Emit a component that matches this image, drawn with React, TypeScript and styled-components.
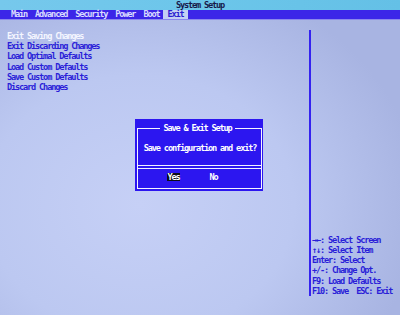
import styled, { createGlobalStyle } from "styled-components";

const GlobalStyle = createGlobalStyle`
  html, body {
    margin: 0;
    padding: 0;
    background: #bac6f0;
  }
`;

const Screen = styled.div`
  position: relative;
  width: 400px;
  height: 315px;
  overflow: hidden;
  display: flex;
  flex-direction: column;
  font-family: "DejaVu Sans Mono", "Liberation Mono", monospace;
  font-weight: bold;
  font-size: 8.6px;
  letter-spacing: -1.16px;
  background: radial-gradient(
    ellipse 70% 75% at 35% 65%,
    #c6d0f6 0%,
    #bcc8f1 55%,
    #a8b4e2 100%
  );
`;

const TitleBar = styled.div`
  height: 10px;
  line-height: 10px;
  text-align: center;
  color: #18184a;
  background: linear-gradient(90deg, #76c8ec, #6cc6ea 50%, #64c0e6);
`;

const MenuBar = styled.div`
  height: 10px;
  display: flex;
  padding-left: 7px;
  background: #3c26e8;
  border-bottom: 1px solid #8c88ec;
  box-sizing: border-box;
`;

const MenuItem = styled.div<{ $active?: boolean }>`
  padding: 0 4px;
  line-height: 9px;
  color: ${(p) => (p.$active ? "#2a1ed0" : "#dadcff")};
  background: ${(p) => (p.$active ? "#c4d0f4" : "transparent")};
`;

const Body = styled.div`
  flex: 1;
  display: flex;
`;

const LeftPanel = styled.div`
  width: 309px;
  padding: 11px 0 0 7px;
  box-sizing: border-box;
`;

const Option = styled.div<{ $selected?: boolean }>`
  line-height: 10.2px;
  color: ${(p) => (p.$selected ? "#f4f6ff" : "#2a1ed8")};
`;

const RightPanel = styled.div`
  margin: 10px 0 19px 0;
  border-left: 2px solid #3422f0;
  padding-left: 1px;
  display: flex;
  flex-direction: column;
  justify-content: flex-end;
`;

const HelpLine = styled.div`
  line-height: 10.2px;
  color: #2a1ed8;
  white-space: pre;
`;

const Dialog = styled.div`
  position: absolute;
  left: 135px;
  top: 119px;
  width: 128px;
  height: 72px;
  box-sizing: border-box;
  padding: 9px 1px 2px 2px;
  background: #2c16f0;
  color: #ffffff;
`;

const Frame = styled.div`
  height: 100%;
  box-sizing: border-box;
  border: 1px solid #f4f4ff;
  display: flex;
  flex-direction: column;
`;

const DialogTitle = styled.div`
  margin-top: -5px;
  height: 9px;
  line-height: 9px;
  display: flex;
  justify-content: center;
  span {
    background: #2c16f0;
    padding: 0 3px;
    margin-left: -4px;
  }
`;

const Message = styled.div`
  margin-top: 10px;
  line-height: 10px;
  text-align: center;
  padding-left: 1px;
`;

const Separator = styled.div`
  margin-top: 12px;
  height: 2px;
  border-top: 1px solid #f0f0ff;
  border-bottom: 1px solid #f0f0ff;
`;

const Buttons = styled.div`
  margin-top: 3px;
  display: flex;
  align-items: center;
  gap: 29px;
  padding-left: 29px;
  height: 10px;
`;

const Choice = styled.div<{ $active?: boolean }>`
  line-height: 8px;
  padding: 0 0.5px;
  color: #ffffff;
  background: ${(p) => (p.$active ? "#0c0c18" : "transparent")};
`;

const menu = ["Main", "Advanced", "Security", "Power", "Boot"];

const options = [
  "Exit Saving Changes",
  "Exit Discarding Changes",
  "Load Optimal Defaults",
  "Load Custom Defaults",
  "Save Custom Defaults",
  "Discard Changes",
];

const help = [
  "→←: Select Screen",
  "↑↓: Select Item",
  "Enter: Select",
  "+/-: Change Opt.",
  "F9: Load Defaults",
  "F10: Save  ESC: Exit",
];

export default function App() {
  return (
    <>
      <GlobalStyle />
      <Screen>
        <TitleBar>System Setup</TitleBar>
        <MenuBar>
          {menu.map((m) => (
            <MenuItem key={m}>{m}</MenuItem>
          ))}
          <MenuItem $active>Exit</MenuItem>
        </MenuBar>
        <Body>
          <LeftPanel>
            {options.map((o, i) => (
              <Option key={o} $selected={i === 0}>
                {o}
              </Option>
            ))}
          </LeftPanel>
          <RightPanel>
            {help.map((h) => (
              <HelpLine key={h}>{h}</HelpLine>
            ))}
          </RightPanel>
        </Body>
        <Dialog>
          <Frame>
            <DialogTitle>
              <span>Save &amp; Exit Setup</span>
            </DialogTitle>
            <Message>Save configuration and exit?</Message>
            <Separator />
            <Buttons>
              <Choice $active>Yes</Choice>
              <Choice>No</Choice>
            </Buttons>
          </Frame>
        </Dialog>
      </Screen>
    </>
  );
}
